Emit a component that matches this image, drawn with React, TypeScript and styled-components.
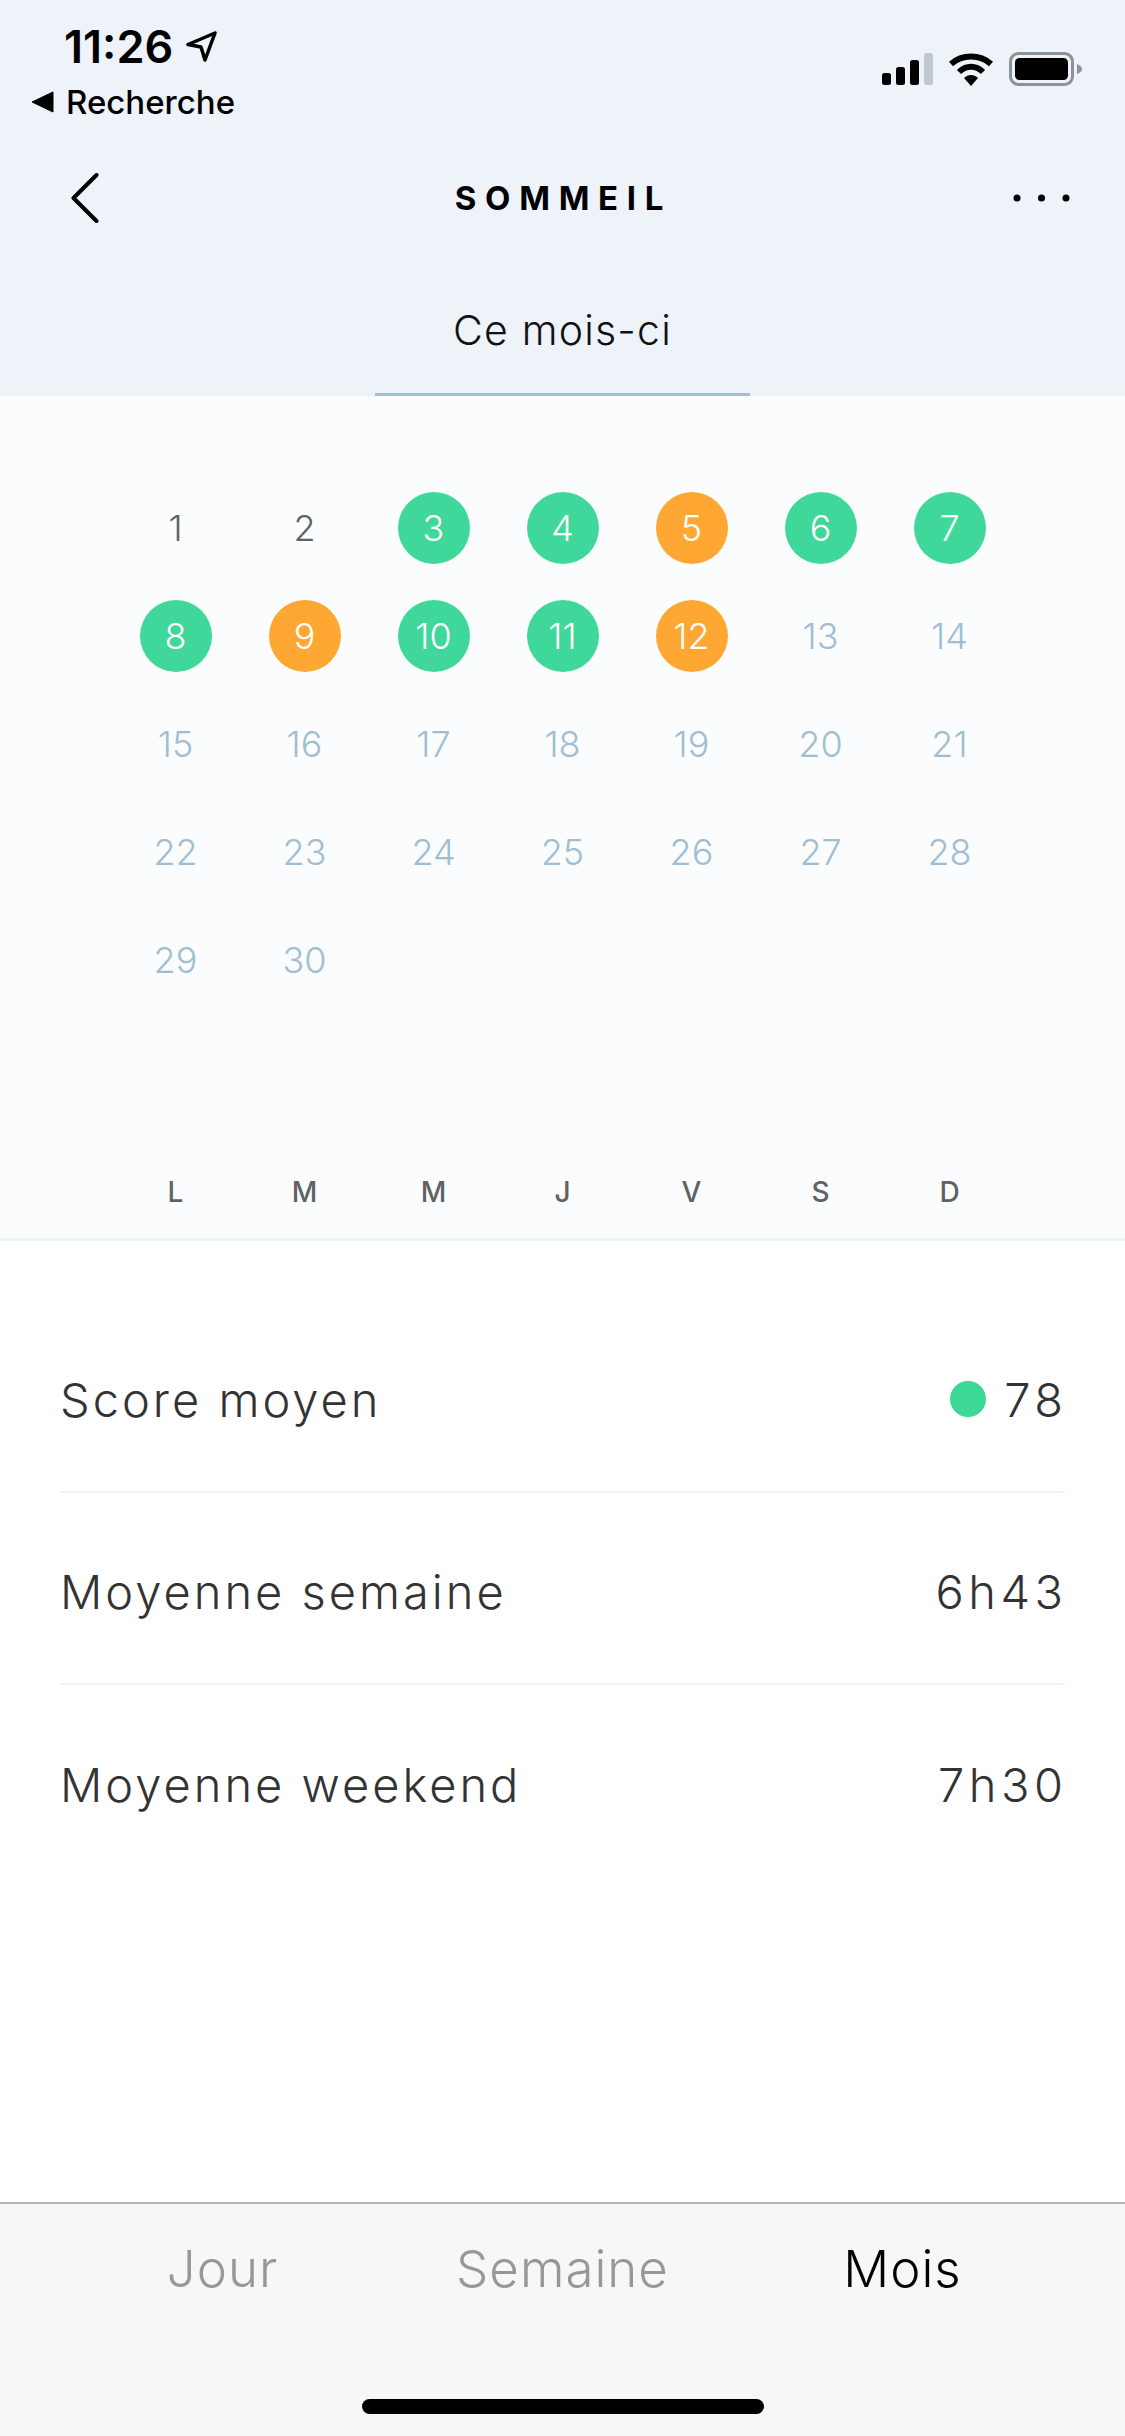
import styled, { createGlobalStyle } from "styled-components";

const GlobalStyle = createGlobalStyle`
  html, body {
    margin: 0;
    padding: 0;
    background: #fff;
  }
  body {
    font-family: Inter, "Liberation Sans", sans-serif;
  }
`;

const Page = styled.div`
  width: 1125px;
  height: 2436px;
  display: flex;
  flex-direction: column;
  overflow: hidden;
  background: #fff;
`;

const Header = styled.header`
  height: 396px;
  flex-shrink: 0;
  background: #edf3f9;
  display: flex;
  flex-direction: column;
`;

const StatusBar = styled.div`
  height: 122px;
  display: flex;
  justify-content: space-between;
  align-items: flex-start;
  padding: 0 43px 0 31px;
`;

const StatusLeft = styled.div`
  display: flex;
  flex-direction: column;
`;

const TimeRow = styled.div`
  display: flex;
  align-items: center;
  gap: 12px;
  margin: 21px 0 0 33px;
  height: 50px;
  font-size: 45px;
  font-weight: 600;
  color: #000;
`;

const BackRow = styled.div`
  display: flex;
  align-items: center;
  gap: 12px;
  margin-top: 11px;
  height: 40px;
  font-size: 33px;
  font-weight: 500;
  color: #000;
`;

const StatusIcons = styled.div`
  display: flex;
  align-items: center;
  gap: 15px;
  margin-top: 52px;
`;

const NavBar = styled.div`
  height: 152px;
  display: grid;
  grid-template-columns: 1fr auto 1fr;
  align-items: center;
  padding: 0 55px 0 71px;
`;

const Title = styled.h1`
  margin: 0 14px 0 0;
  font-size: 33px;
  font-weight: 700;
  letter-spacing: 8.7px;
  color: #000;
`;

const NavRight = styled.div`
  display: flex;
  justify-content: flex-end;
`;

const Tab = styled.div`
  width: 375px;
  margin: 0 auto;
  flex: 1;
  display: flex;
  align-items: center;
  justify-content: center;
  padding-bottom: 8px;
  font-size: 41px;
  font-weight: 300;
  letter-spacing: 1.2px;
  color: #111;
  border-bottom: 3px solid #a3bfd2;
`;

const Calendar = styled.section`
  height: 845px;
  flex-shrink: 0;
  box-sizing: border-box;
  border-bottom: 3px solid #eef3f7;
  background: #fbfcfe;
  display: flex;
  flex-direction: column;
  align-items: center;
  padding-top: 78px;
`;

const DayGrid = styled.div`
  width: 903px;
  display: grid;
  grid-template-columns: repeat(7, 129px);
  grid-auto-rows: 108px;
  height: 540px;
`;

const DayCell = styled.div`
  display: flex;
  align-items: center;
  justify-content: center;
`;

const DayNumber = styled.div<{ $status: string }>`
  width: 72px;
  height: 72px;
  border-radius: 50%;
  display: flex;
  align-items: center;
  justify-content: center;
  font-size: 36px;
  font-weight: 300;
  background: ${(p) =>
    p.$status === "good" ? "#40d89a" : p.$status === "warn" ? "#ffa733" : "transparent"};
  color: ${(p) =>
    p.$status === "past" ? "#5f6163" : p.$status === "future" ? "#a0bed2" : "#fff"};
`;

const WeekRow = styled.div`
  width: 903px;
  margin-top: 161px;
  display: grid;
  grid-template-columns: repeat(7, 129px);
`;

const WeekDay = styled.div`
  text-align: center;
  font-size: 28px;
  line-height: 34px;
  font-weight: 500;
  color: #5f6163;
`;

const Metrics = styled.section`
  flex: 1;
  margin: 0 60px;
  padding-top: 60px;
`;

const MetricRow = styled.div`
  height: 192px;
  box-sizing: border-box;
  padding-top: 6px;
  display: flex;
  align-items: center;
  justify-content: space-between;
  font-size: 47px;
  font-weight: 300;
  letter-spacing: 3px;
  color: #333;
  border-bottom: 2px solid #edf2f7;

  &:last-child {
    border-bottom: none;
  }
`;

const MetricValue = styled.div`
  display: flex;
  align-items: center;
  gap: 18px;
  margin-right: -2.5px;
  letter-spacing: 4.5px;
`;

const ScoreDot = styled.span`
  width: 36px;
  height: 36px;
  border-radius: 50%;
  background: #3ed896;
`;

const BottomBar = styled.nav`
  height: 234px;
  flex-shrink: 0;
  box-sizing: border-box;
  border-top: 2px solid #b2b2b2;
  background: #f7f7f7;
  display: flex;
  flex-direction: column;
  align-items: center;
`;

const BottomTabs = styled.div`
  width: 1020px;
  margin-top: 35px;
  display: grid;
  grid-template-columns: repeat(3, 340px);
`;

const BottomTab = styled.div<{ $active?: boolean }>`
  text-align: center;
  font-size: 51px;
  line-height: 60px;
  font-weight: 300;
  letter-spacing: 1px;
  color: ${(p) => (p.$active ? "#000" : "#979797")};
`;

const HomeIndicator = styled.div`
  width: 402px;
  height: 15px;
  margin-top: 100px;
  border-radius: 8px;
  background: #000;
`;

const LocationIcon = () => (
  <svg width="32" height="32" viewBox="0 0 32 32">
    <path
      d="M30 3 L3 14.5 L16 17 L20 30 Z"
      fill="none"
      stroke="#000"
      strokeWidth="3.5"
      strokeLinejoin="round"
    />
  </svg>
);

const BackTriangle = () => (
  <svg width="23" height="22" viewBox="0 0 23 22">
    <path d="M22 1 V21 L1 11 Z" fill="#000" stroke="#000" strokeWidth="1" strokeLinejoin="round" />
  </svg>
);

const SignalIcon = () => (
  <svg width="51" height="33" viewBox="0 0 51 33">
    <rect x="0" y="20" width="9" height="12" rx="2.5" fill="#000" />
    <rect x="14" y="14" width="9" height="18" rx="2.5" fill="#000" />
    <rect x="28" y="7" width="9" height="25" rx="2.5" fill="#000" />
    <rect x="42" y="0" width="9" height="32" rx="2.5" fill="#c0c8ce" />
  </svg>
);

const WifiIcon = () => (
  <svg width="46" height="33" viewBox="0 0 46 33">
    <path d="M3 11 C14 1 32 1 43 11" fill="none" stroke="#000" strokeWidth="6" />
    <path d="M11 19 C18 12 28 12 35 19" fill="none" stroke="#000" strokeWidth="6" />
    <path d="M16 25 C20 21 26 21 30 25 L23 33 Z" fill="#000" />
  </svg>
);

const BatteryIcon = () => (
  <svg width="73" height="34" viewBox="0 0 73 34">
    <rect x="1.5" y="1.5" width="62" height="31" rx="8" fill="none" stroke="#8d9296" strokeWidth="3" />
    <rect x="6" y="6" width="53" height="22" rx="4.5" fill="#000" />
    <path d="M68 12 C71 13 73 15 73 17 C73 19 71 21 68 22 Z" fill="#8d9296" />
  </svg>
);

const ChevronIcon = () => (
  <svg width="28" height="50" viewBox="0 0 28 50">
    <path
      d="M25.5 2 L2.5 25 L25.5 48"
      fill="none"
      stroke="#000"
      strokeWidth="4"
      strokeLinecap="round"
      strokeLinejoin="round"
    />
  </svg>
);

const DotsIcon = () => (
  <svg width="57" height="8" viewBox="0 0 57 8">
    <circle cx="4" cy="4" r="3.5" fill="#000" />
    <circle cx="28.5" cy="4" r="3.5" fill="#000" />
    <circle cx="53" cy="4" r="3.5" fill="#000" />
  </svg>
);

const statusOf = (day: number) => {
  if (day <= 2) return "past";
  if (day > 12) return "future";
  return [5, 9, 12].includes(day) ? "warn" : "good";
};

const days = Array.from({ length: 30 }, (_, i) => i + 1);
const weekDays = ["L", "M", "M", "J", "V", "S", "D"];

export default function App() {
  return (
    <Page>
      <GlobalStyle />
      <Header>
        <StatusBar>
          <StatusLeft>
            <TimeRow>
              11:26
              <LocationIcon />
            </TimeRow>
            <BackRow>
              <BackTriangle />
              Recherche
            </BackRow>
          </StatusLeft>
          <StatusIcons>
            <SignalIcon />
            <WifiIcon />
            <BatteryIcon />
          </StatusIcons>
        </StatusBar>
        <NavBar>
          <ChevronIcon />
          <Title>SOMMEIL</Title>
          <NavRight>
            <DotsIcon />
          </NavRight>
        </NavBar>
        <Tab>Ce mois-ci</Tab>
      </Header>
      <Calendar>
        <DayGrid>
          {days.map((day) => (
            <DayCell key={day}>
              <DayNumber $status={statusOf(day)}>{day}</DayNumber>
            </DayCell>
          ))}
        </DayGrid>
        <WeekRow>
          {weekDays.map((d, i) => (
            <WeekDay key={i}>{d}</WeekDay>
          ))}
        </WeekRow>
      </Calendar>
      <Metrics>
        <MetricRow>
          Score moyen
          <MetricValue>
            <ScoreDot />
            78
          </MetricValue>
        </MetricRow>
        <MetricRow>
          Moyenne semaine
          <MetricValue>6h43</MetricValue>
        </MetricRow>
        <MetricRow>
          Moyenne weekend
          <MetricValue>7h30</MetricValue>
        </MetricRow>
      </Metrics>
      <BottomBar>
        <BottomTabs>
          <BottomTab>Jour</BottomTab>
          <BottomTab>Semaine</BottomTab>
          <BottomTab $active>Mois</BottomTab>
        </BottomTabs>
        <HomeIndicator />
      </BottomBar>
    </Page>
  );
}
